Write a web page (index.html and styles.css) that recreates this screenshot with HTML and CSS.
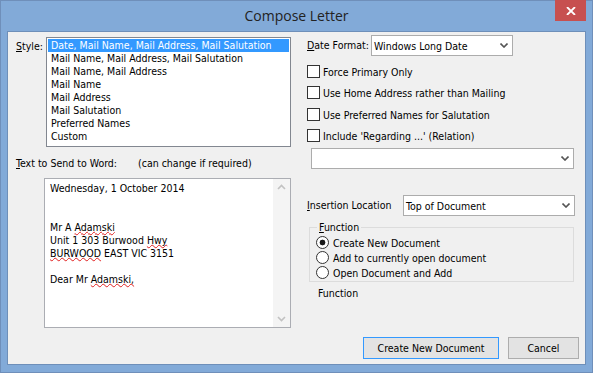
FILE: index.html
```html
<!DOCTYPE html>
<html lang="en">

<head>
    <meta charset="UTF-8">
    <title>Compose Letter</title>
    <link rel="stylesheet" href="styles.css">
</head>

<body>
    <div class="window">
        <div class="titlebar">
            Compose Letter
            <div class="close">
                <svg width="10" height="8" viewBox="0 0 10 8">
                    <path d="M1 0 L9 8 M9 0 L1 8" stroke="#fff" stroke-width="1.8" fill="none" />
                </svg>
            </div>
        </div>
        <div class="client">
            <div class="left">
                <div class="style-row">
                    <div class="label"><u>S</u>tyle:</div>
                    <div class="listbox">
                        <div class="sel">Date, Mail Name, Mail Address, Mail Salutation</div>
                        <div>Mail Name, Mail Address, Mail Salutation</div>
                        <div>Mail Name, Mail Address</div>
                        <div>Mail Name</div>
                        <div>Mail Address</div>
                        <div>Mail Salutation</div>
                        <div>Preferred Names</div>
                        <div>Custom</div>
                    </div>
                </div>
                <div class="memo-label">
                    <span class="first"><u>T</u>ext to Send to Word:</span><span>(can change if required)</span>
                </div>
                <div class="memo">
                    <div class="memo-text">
                        <div>Wednesday, 1 October 2014</div>
                        <div>&nbsp;</div>
                        <div>&nbsp;</div>
                        <div>Mr A <span class="spell">Adamski</span></div>
                        <div>Unit 1 303 Burwood <span class="spell">Hwy</span></div>
                        <div><span class="spell">BURWOOD</span> EAST VIC 3151</div>
                        <div>&nbsp;</div>
                        <div>Dear Mr <span class="spell">Adamski,</span></div>
                    </div>
                    <div class="scroll">
                        <svg width="17" height="17" viewBox="0 0 17 17">
                            <path d="M5 10 L8.5 6.5 L12 10" stroke="#c2c2c2" stroke-width="1.6" fill="none" />
                        </svg>
                        <svg width="17" height="17" viewBox="0 0 17 17">
                            <path d="M5 7 L8.5 10.5 L12 7" stroke="#c2c2c2" stroke-width="1.6" fill="none" />
                        </svg>
                    </div>
                </div>
            </div>

            <div class="right">
                <div class="date-row">
                    <div class="label date-label"><u>D</u>ate Format:</div>
                    <div class="combo date-combo">
                        <span>Windows Long Date</span>
                        <svg width="8" height="5" viewBox="0 0 8 5">
                            <path d="M0.5 0.5 L4 4 L7.5 0.5" stroke="#555" stroke-width="1.6" fill="none" />
                        </svg>
                    </div>
                </div>
                <div class="checks">
                    <div class="check"><span class="box"></span>Force Primary Only</div>
                    <div class="check"><span class="box"></span>Use Home Address rather than Mailing</div>
                    <div class="check third"><span class="box"></span>Use Preferred Names for Salutation</div>
                    <div class="check"><span class="box"></span>Include 'Regarding ...' (Relation)</div>
                </div>
                <div class="combo relation-combo">
                    <span></span>
                    <svg width="8" height="5" viewBox="0 0 8 5">
                        <path d="M0.5 0.5 L4 4 L7.5 0.5" stroke="#555" stroke-width="1.6" fill="none" />
                    </svg>
                </div>
                <div class="insert-row">
                    <div class="label insert-label"><u>I</u>nsertion Location</div>
                    <div class="combo insert-combo">
                        <span>Top of Document</span>
                        <svg width="8" height="5" viewBox="0 0 8 5">
                            <path d="M0.5 0.5 L4 4 L7.5 0.5" stroke="#555" stroke-width="1.6" fill="none" />
                        </svg>
                    </div>
                </div>
                <fieldset class="group">
                    <legend><u>F</u>unction</legend>
                    <div class="radio"><span class="dot on"></span>Create New Document</div>
                    <div class="radio"><span class="dot"></span>Add to currently open document</div>
                    <div class="radio"><span class="dot"></span>Open Document and Add</div>
                </fieldset>
                <div class="function-label">Function</div>
                <div class="buttons">
                    <div class="btn default">Create New Document</div>
                    <div class="btn cancel">Cancel</div>
                </div>
            </div>
        </div>
    </div>
</body>

</html>
```

FILE: styles.css
```css
body {
    margin: 0;
    font-family: "DejaVu Sans Condensed", "Liberation Sans", sans-serif;
    font-size: 10.5px;
    color: #000;
}

.window {
    width: 593px;
    height: 373px;
    box-sizing: border-box;
    background-color: #82aad8;
    border: 1px solid #6f8fba;
    padding: 0 6px 7px;
    display: flex;
    flex-direction: column;
}

.titlebar {
    height: 30px;
    flex-shrink: 0;
    position: relative;
    text-align: center;
    line-height: 29px;
    font-family: "Open Sans", sans-serif;
    font-size: 14px;
    color: #222;
}

.close {
    position: absolute;
    right: 0;
    top: -1px;
    width: 31px;
    height: 21px;
    background-color: #c75050;
    display: flex;
    align-items: center;
    justify-content: center;
}

.client {
    flex: 1;
    background-color: #f0f0f0;
    border: 1px solid #6e8fb9;
    display: flex;
    padding: 0 6px 5px 8px;
}

.label {
    line-height: 13px;
}

/* left side */
.left {
    width: 275px;
    display: flex;
    flex-direction: column;
}

.style-row {
    display: flex;
    margin-top: 5px;
}

.style-row .label {
    width: 30px;
    padding-top: 3px;
}

.listbox {
    width: 245px;
    height: 110px;
    box-sizing: border-box;
    border: 1px solid #828790;
    background-color: #fff;
    padding: 1px;
}

.listbox div {
    height: 13px;
    line-height: 13px;
    padding-left: 3px;
    white-space: nowrap;
}

.listbox .sel {
    background-color: #3399ff;
    color: #fff;
}

.memo-label {
    margin-top: 10px;
    line-height: 13px;
}

.memo-label .first {
    display: inline-block;
    width: 122px;
}

.memo {
    margin-top: 8px;
    margin-left: 28px;
    width: 247px;
    height: 150px;
    box-sizing: border-box;
    border: 1px solid #abadb3;
    background-color: #fff;
    display: flex;
}

.memo-text {
    flex: 1;
    padding: 3px 0 0 5px;
    line-height: 13px;
}

.spell {
    text-decoration-line: underline;
    text-decoration-style: wavy;
    text-decoration-color: #e02020;
    text-decoration-thickness: 1px;
    text-decoration-skip-ink: none;
    text-underline-offset: 0;
}

.scroll {
    width: 17px;
    background-color: #f4f4f4;
    display: flex;
    flex-direction: column;
    justify-content: space-between;
}

/* right side */
.right {
    flex: 1;
    margin-left: 15px;
    display: flex;
    flex-direction: column;
}

.combo {
    box-sizing: border-box;
    height: 21px;
    border: 1px solid #acacac;
    background-color: #fff;
    display: flex;
    align-items: center;
    justify-content: space-between;
    padding: 0 4px 0 2px;
    flex-shrink: 0;
}

.date-row {
    display: flex;
    align-items: center;
    margin-top: 3px;
}

.date-label {
    width: 64px;
    padding-left: 1px;
}

.date-combo {
    width: 142px;
}

.checks {
    margin-top: 9px;
    padding-left: 1px;
    display: flex;
    flex-direction: column;
    gap: 8px;
}

.check {
    display: flex;
    align-items: center;
    height: 13px;
}

.check.third {
    margin-top: 1px;
}

.box {
    width: 13px;
    height: 13px;
    box-sizing: border-box;
    border: 1px solid #333;
    background-color: #fff;
    margin-right: 3px;
}

.relation-combo {
    width: 263px;
    margin: 6px 0 0 5px;
}

.insert-row {
    display: flex;
    align-items: center;
    margin-top: 26px;
}

.insert-label {
    width: 96px;
    padding-left: 1px;
}

.insert-combo {
    width: 172px;
}

.group {
    margin: 5px 0 0 3px;
    width: 265px;
    box-sizing: border-box;
    border: 1px solid #dcdcdc;
    padding: 1px 0 1px 6px;
    min-width: 0;
}

.group legend {
    padding: 0 2px;
    margin-left: 1px;
    line-height: 13px;
}

.radio {
    display: flex;
    align-items: center;
    height: 15px;
}

.dot {
    width: 13px;
    height: 13px;
    box-sizing: border-box;
    border: 1px solid #333;
    border-radius: 50%;
    background-color: #fff;
    margin-right: 4px;
}

.dot.on {
    background: radial-gradient(circle, #1a1a1a 0 2.6px, #fff 3.2px);
}

.function-label {
    margin-top: 5px;
    padding-left: 12px;
    line-height: 13px;
}

.buttons {
    margin-top: auto;
    display: flex;
    justify-content: flex-end;
    gap: 9px;
}

.btn {
    height: 22px;
    box-sizing: border-box;
    display: flex;
    align-items: center;
    justify-content: center;
    background-color: #e3e3e3;
    border: 1px solid #adadad;
}

.btn.default {
    width: 136px;
    border-color: #3399ff;
}

.btn.cancel {
    width: 71px;
}
```
